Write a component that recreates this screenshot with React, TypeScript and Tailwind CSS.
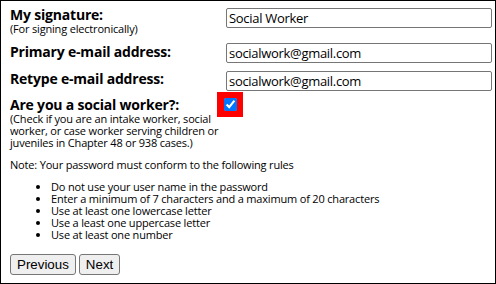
import React from "react";

const font = { fontFamily: '"Open Sans", sans-serif' };

export default function App() {
  return (
    <div className="w-[496px] h-[284px] border border-black bg-white text-black overflow-hidden" style={font}>
      <div className="pl-[9px] pt-[6px]">
        {/* Row 1 */}
        <div className="flex h-[35px]">
          <div className="w-[216px] shrink-0">
            <div className="text-[14px] font-bold leading-[16px] tracking-[-0.2px]">My signature:</div>
            <div className="text-[11px] leading-[12px] tracking-[-0.18px]">(For signing electronically)</div>
          </div>
          <input
            type="text"
            defaultValue="Social Worker"
            className="mt-[1px] w-[266px] h-[20px] border border-[#767676] rounded-[2px] px-[2px] text-[13px] tracking-[-0.3px] outline-none"
            style={font}
          />
        </div>
        {/* Row 2 */}
        <div className="flex h-[28px] mt-[1px]">
          <div className="w-[216px] shrink-0 pt-[1px] text-[14px] font-bold leading-[16px] tracking-[-0.2px]">Primary e-mail address:</div>
          <input
            type="text"
            defaultValue="socialwork@gmail.com"
            className="w-[266px] h-[20px] border border-[#767676] rounded-[2px] px-[2px] text-[13px] tracking-[-0.3px] outline-none"
            style={font}
          />
        </div>
        {/* Row 3 */}
        <div className="flex h-[20px]">
          <div className="w-[216px] shrink-0 text-[14px] font-bold leading-[16px] tracking-[-0.2px]">Retype e-mail address:</div>
          <input
            type="text"
            defaultValue="socialwork@gmail.com"
            className="w-[266px] h-[20px] border border-[#767676] rounded-[2px] px-[2px] text-[13px] tracking-[-0.3px] outline-none"
            style={font}
          />
        </div>
        {/* Row 4 */}
        <div className="flex">
          <div className="w-[207px] shrink-0 pt-[6px]">
            <div className="text-[14px] font-bold leading-[16px] tracking-[-0.2px]">Are you a social worker?:</div>
            <div className="text-[11px] leading-[12px] whitespace-nowrap tracking-[-0.18px]">
              (Check if you are an intake worker, social
              <br />
              worker, or case worker serving children or
              <br />
              juveniles in Chapter 48 or 938 cases.)
            </div>
          </div>
          <div className="w-[26px] h-[25px] bg-[#ff0000] mt-[1px] pl-[7px] pt-[6px]">
            <input type="checkbox" defaultChecked className="m-0 w-[13px] h-[13px] block accent-[#0075ff]" />
          </div>
        </div>
        {/* Note */}
        <div className="text-[11px] leading-[12px] mt-[10px] tracking-[-0.18px]">Note: Your password must conform to the following rules</div>
        <ul className="list-disc pl-[41px] mt-[10px] text-[11px] leading-[12px] tracking-[-0.18px]">
          <li>Do not use your user name in the password</li>
          <li>Enter a minimum of 7 characters and a maximum of 20 characters</li>
          <li>Use at least one lowercase letter</li>
          <li>Use a least one uppercase letter</li>
          <li>Use at least one number</li>
        </ul>
        <div className="flex gap-[3px] mt-[13px]" style={{ fontFamily: '"Liberation Sans", Arial, sans-serif' }}>
          <button className="h-[21px] px-[6px] border border-[#767676] rounded-[3px] bg-[#efefef] text-[13.33px] leading-[15px]">Previous</button>
          <button className="h-[21px] px-[6px] border border-[#767676] rounded-[3px] bg-[#efefef] text-[13.33px] leading-[15px]">Next</button>
        </div>
      </div>
    </div>
  );
}
